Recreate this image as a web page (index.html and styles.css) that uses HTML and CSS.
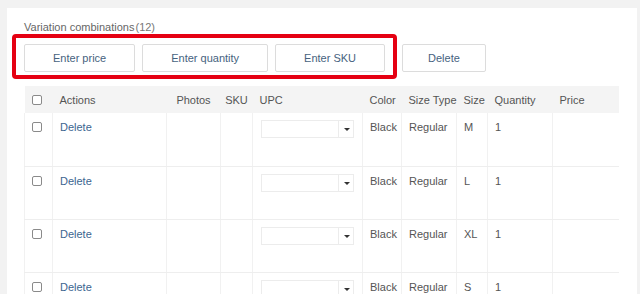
FILE: index.html
```html
<!DOCTYPE html>
<html lang="en">
<head>
    <meta charset="UTF-8">
    <meta name="viewport" content="width=device-width, initial-scale=1.0">
    <title>Variation combinations</title>
    <link rel="stylesheet" href="styles.css">
</head>
<body>
    <div class="panel">
        <h3 class="title">Variation combinations<span class="count">(12)</span></h3>

        <div class="toolbar">
            <div class="group">
                <button type="button" class="btn">Enter price</button>
                <button type="button" class="btn">Enter quantity</button>
                <button type="button" class="btn">Enter SKU</button>
                <span class="mark"></span>
            </div>
            <button type="button" class="btn btn-delete">Delete</button>
        </div>

        <table class="grid">
            <colgroup>
                <col style="width: 28px">
                <col style="width: 114px">
                <col style="width: 54px">
                <col style="width: 32px">
                <col style="width: 110px">
                <col style="width: 39px">
                <col style="width: 55px">
                <col style="width: 31px">
                <col style="width: 65px">
                <col>
            </colgroup>
            <thead>
                <tr>
                    <th><input type="checkbox" class="check"></th>
                    <th>Actions</th>
                    <th class="center">Photos</th>
                    <th class="center">SKU</th>
                    <th>UPC</th>
                    <th>Color</th>
                    <th>Size Type</th>
                    <th>Size</th>
                    <th>Quantity</th>
                    <th>Price</th>
                </tr>
            </thead>
            <tbody>
                <tr>
                    <td><input type="checkbox" class="check"></td>
                    <td><a href="#" class="link">Delete</a></td>
                    <td></td>
                    <td></td>
                    <td><div class="dropdown"><span class="dropdown-value"></span><span class="dropdown-caret"></span></div></td>
                    <td>Black</td>
                    <td>Regular</td>
                    <td>M</td>
                    <td>1</td>
                    <td></td>
                </tr>
                <tr>
                    <td><input type="checkbox" class="check"></td>
                    <td><a href="#" class="link">Delete</a></td>
                    <td></td>
                    <td></td>
                    <td><div class="dropdown"><span class="dropdown-value"></span><span class="dropdown-caret"></span></div></td>
                    <td>Black</td>
                    <td>Regular</td>
                    <td>L</td>
                    <td>1</td>
                    <td></td>
                </tr>
                <tr>
                    <td><input type="checkbox" class="check"></td>
                    <td><a href="#" class="link">Delete</a></td>
                    <td></td>
                    <td></td>
                    <td><div class="dropdown"><span class="dropdown-value"></span><span class="dropdown-caret"></span></div></td>
                    <td>Black</td>
                    <td>Regular</td>
                    <td>XL</td>
                    <td>1</td>
                    <td></td>
                </tr>
                <tr>
                    <td><input type="checkbox" class="check"></td>
                    <td><a href="#" class="link">Delete</a></td>
                    <td></td>
                    <td></td>
                    <td><div class="dropdown"><span class="dropdown-value"></span><span class="dropdown-caret"></span></div></td>
                    <td>Black</td>
                    <td>Regular</td>
                    <td>S</td>
                    <td>1</td>
                    <td></td>
                </tr>
            </tbody>
        </table>
    </div>
</body>
</html>
```

FILE: styles.css
```css
body {
    font-family: "Liberation Sans", Arial, sans-serif;
    font-size: 11px;
    background-color: #f2f2f2;
    margin: 0;
    padding: 8px 3px 0 7px;
    height: 294px;
    box-sizing: border-box;
    overflow: hidden;
}
.panel {
    background: #fff;
    padding: 13px 17px 0 17px;
    height: 100%;
}
.title {
    margin: 0 0 10px 0;
    font-size: 11px;
    line-height: 13px;
    font-weight: normal;
    color: #666;
}
.title .count {
    margin-left: 1px;
    color: #777;
}
.toolbar {
    display: flex;
    align-items: center;
}
.group {
    position: relative;
    display: flex;
    gap: 7px;
}
.mark {
    position: absolute;
    top: -10px;
    bottom: -7px;
    left: -12px;
    right: -12px;
    border: 4px solid #e50012;
    border-radius: 4px;
}
.btn {
    height: 28px;
    padding: 0 28px;
    background: #fff;
    border: 1px solid #dcdcdc;
    border-radius: 2px;
    font-family: inherit;
    font-size: 11px;
    color: #46627e;
    cursor: pointer;
}
.btn-delete {
    margin-left: 17px;
    padding: 0 25px;
}
.grid {
    margin-top: 14px;
    width: 595px;
    border-collapse: collapse;
    table-layout: fixed;
}
.grid th {
    height: 27px;
    padding: 0 7px;
    background-color: #f4f4f4;
    font-weight: normal;
    text-align: left;
    color: #555;
    white-space: nowrap;
}
.grid th.center {
    text-align: center;
    padding: 0 3px;
}
.grid td {
    height: 53px;
    padding: 8px 7px 0 7px;
    box-sizing: border-box;
    vertical-align: top;
    line-height: 13px;
    color: #555;
    border-left: 1px solid #f1f1f1;
    border-bottom: 1px solid #eeeeee;
}
.check {
    appearance: none;
    display: block;
    box-sizing: border-box;
    width: 10px;
    height: 10px;
    margin: 0;
    border: 1px solid #8a8a8a;
    border-radius: 2px;
    background: #fff;
}
.grid td .check {
    margin-top: 1px;
}
.link {
    color: #3b6590;
    text-decoration: none;
}
.dropdown {
    display: flex;
    width: 93px;
    height: 18px;
    margin: -1px 0 0 1px;
    border: 1px solid #ececec;
    box-sizing: border-box;
}
.dropdown-value {
    flex: 1;
}
.dropdown-caret {
    width: 14px;
    border-left: 1px solid #ececec;
    position: relative;
}
.dropdown-caret::after {
    content: "";
    position: absolute;
    left: 5px;
    top: 7px;
    border-left: 3px solid transparent;
    border-right: 3px solid transparent;
    border-top: 3px solid #333;
}
```
